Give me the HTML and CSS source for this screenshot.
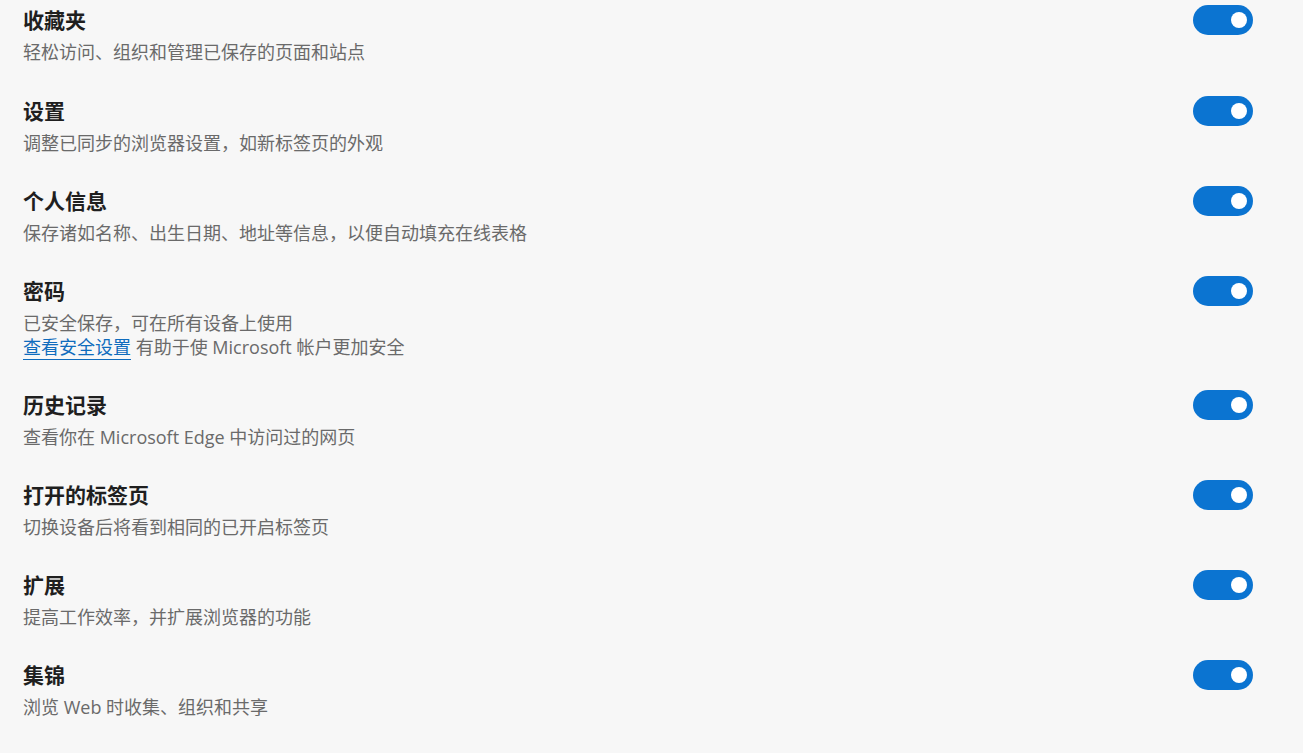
FILE: index.html
```html
<!DOCTYPE html>
<html lang="zh-CN">
<head>
  <meta charset="UTF-8">
  <title>同步</title>
  <link rel="stylesheet" href="styles.css">
</head>
<body>

<div class="sync-list">
  <div class="sync-item">
    <div class="sync-text">
      <div class="sync-title">收藏夹</div>
      <div class="sync-desc">轻松访问、组织和管理已保存的页面和站点</div>
    </div>
    <div class="toggle on"><span class="knob"></span></div>
  </div>

  <div class="sync-item">
    <div class="sync-text">
      <div class="sync-title">设置</div>
      <div class="sync-desc">调整已同步的浏览器设置，如新标签页的外观</div>
    </div>
    <div class="toggle on"><span class="knob"></span></div>
  </div>

  <div class="sync-item">
    <div class="sync-text">
      <div class="sync-title">个人信息</div>
      <div class="sync-desc">保存诸如名称、出生日期、地址等信息，以便自动填充在线表格</div>
    </div>
    <div class="toggle on"><span class="knob"></span></div>
  </div>

  <div class="sync-item">
    <div class="sync-text">
      <div class="sync-title">密码</div>
      <div class="sync-desc">已安全保存，可在所有设备上使用</div>
      <div class="sync-desc"><a href="#" class="link">查看安全设置</a> 有助于使 Microsoft 帐户更加安全</div>
    </div>
    <div class="toggle on"><span class="knob"></span></div>
  </div>

  <div class="sync-item">
    <div class="sync-text">
      <div class="sync-title">历史记录</div>
      <div class="sync-desc">查看你在 Microsoft Edge 中访问过的网页</div>
    </div>
    <div class="toggle on"><span class="knob"></span></div>
  </div>

  <div class="sync-item">
    <div class="sync-text">
      <div class="sync-title">打开的标签页</div>
      <div class="sync-desc">切换设备后将看到相同的已开启标签页</div>
    </div>
    <div class="toggle on"><span class="knob"></span></div>
  </div>

  <div class="sync-item">
    <div class="sync-text">
      <div class="sync-title">扩展</div>
      <div class="sync-desc">提高工作效率，并扩展浏览器的功能</div>
    </div>
    <div class="toggle on"><span class="knob"></span></div>
  </div>

  <div class="sync-item">
    <div class="sync-text">
      <div class="sync-title">集锦</div>
      <div class="sync-desc">浏览 Web 时收集、组织和共享</div>
    </div>
    <div class="toggle on"><span class="knob"></span></div>
  </div>
</div>

</body>
</html>
```

FILE: styles.css
```css
body {
  font-family: "Open Sans", "Noto Sans CJK SC", sans-serif;
  background-color: #f7f7f7;
  margin: 0;
  padding: 0;
}
.sync-list {
  padding: 4px 50px 0 23px;
}
.sync-item {
  display: flex;
  justify-content: space-between;
  align-items: flex-start;
  padding-bottom: 30px;
}
.sync-item:first-child {
  padding-bottom: 31px;
}
.sync-title {
  font-size: 21px;
  font-weight: bold;
  color: #1f1f1f;
  line-height: 30px;
  font-family: "Noto Sans CJK SC", sans-serif;
}
.sync-desc {
  font-size: 18px;
  color: #6a6a6a;
  line-height: 24px;
}
.sync-title + .sync-desc {
  margin-top: 6px;
}
.link {
  color: #0f6cbd;
  text-decoration: none;
  border-bottom: 1px solid #0f6cbd;
}
.toggle {
  width: 60px;
  height: 30px;
  border-radius: 15px;
  background-color: #0b74d1;
  margin-top: 1px;
  display: flex;
  align-items: center;
  justify-content: flex-end;
  padding-right: 6px;
  box-sizing: border-box;
}
.knob {
  width: 16px;
  height: 16px;
  border-radius: 50%;
  background: white;
}
```
